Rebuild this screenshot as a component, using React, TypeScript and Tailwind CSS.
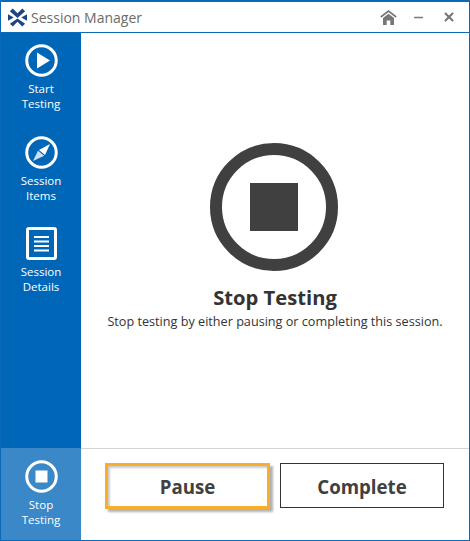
import { Minus, X } from 'lucide-react';

const font = { fontFamily: '"Open Sans", "Liberation Sans", sans-serif' };

function PlayIcon() {
  return (
    <svg width="33" height="33" viewBox="0 0 33 33">
      <circle cx="16.5" cy="16.5" r="14.75" fill="none" stroke="white" strokeWidth="3" />
      <path d="M12 8.5 L25 16.5 L12 24.5 Z" fill="white" />
    </svg>
  );
}

function CompassIcon() {
  return (
    <svg width="33" height="33" viewBox="0 0 33 33">
      <circle cx="16.5" cy="16.5" r="14.75" fill="none" stroke="white" strokeWidth="3" />
      <path d="M25 8 L20 19 L14 14 Z" fill="white" />
      <path d="M8 25 L13 14.8 L19.2 19.8 Z" fill="white" opacity="0.8" />
    </svg>
  );
}

function DetailsIcon() {
  return (
    <svg width="31" height="33" viewBox="0 0 31 33">
      <rect x="1.5" y="1.5" width="28" height="30" rx="1.5" fill="none" stroke="white" strokeWidth="3" />
      <path d="M8 9h15v2H8zM8 13.5h15v2H8zM8 18h15v2H8zM8 22.5h15v2H8z" fill="white" />
    </svg>
  );
}

function StopIcon() {
  return (
    <svg width="33" height="33" viewBox="0 0 33 33">
      <circle cx="16.5" cy="16.5" r="14.75" fill="none" stroke="white" strokeWidth="3" />
      <rect x="10.5" y="10.5" width="12" height="12" fill="white" />
    </svg>
  );
}

function Logo() {
  return (
    <svg width="19" height="19" viewBox="0 0 20 19">
      <path d="M2 3 L5 0 L10 5 L15 0 L18 3 L10 10 Z" fill="#1c4587" />
      <path d="M2 16 L5 19 L10 14 L15 19 L18 16 L10 10.5 Z" fill="#1c4587" />
      <path d="M0 6 L6 9.5 L0 13 Z" fill="#1c4587" />
      <path d="M20 6 L14 9.5 L20 13 Z" fill="#1c4587" />
    </svg>
  );
}

function HomeIcon() {
  return (
    <svg width="17" height="15" viewBox="0 0 17 15">
      <path d="M0.8 7 L8.5 1 L16.2 7" fill="none" stroke="#777777" strokeWidth="1.6" />
      <path d="M3 8 L8.5 3.8 L14 8 V15 H10.3 V10.5 H6.7 V15 H3 Z" fill="#777777" />
    </svg>
  );
}

function NavItem({ icon, top, bottom, active }: { icon: React.ReactNode; top: string; bottom: string; active?: boolean }) {
  return (
    <div className={`flex flex-col items-center text-[11.5px] leading-[15px] text-white ${active ? 'bg-[#3a88c8] h-[92px] pt-[12px]' : 'h-[91.5px] pt-[11px]'}`}>
      {icon}
      <div className="mt-[4px] text-center">
        <div>{top}</div>
        <div>{bottom}</div>
      </div>
    </div>
  );
}

export default function App() {
  return (
    <div style={font} className="w-[470px] h-[541px] bg-white border-x border-b border-t-2 border-[#0a6ab8] flex flex-col overflow-hidden">
      {/* Title bar */}
      <div className="h-[30px] shrink-0 flex items-center border-b border-[#0a6ab8] box-content">
        <div className="ml-[7px] flex"><Logo /></div>
        <span className="ml-[4px] text-[14px] text-[#6b6b6b]">Session Manager</span>
        <div className="ml-auto flex items-center text-[#777777]">
          <HomeIcon />
          <Minus size={13} strokeWidth={3} className="ml-[15px]" />
          <X size={14} strokeWidth={3.5} className="ml-[17px] mr-[13px]" />
        </div>
      </div>

      <div className="flex flex-1 min-h-0">
        {/* Sidebar */}
        <div className="w-[80px] bg-[#0067b8] flex flex-col">
          <NavItem icon={<PlayIcon />} top="Start" bottom="Testing" />
          <NavItem icon={<CompassIcon />} top="Session" bottom="Items" />
          <NavItem icon={<DetailsIcon />} top="Session" bottom="Details" />
          <div className="mt-auto">
            <NavItem icon={<StopIcon />} top="Stop" bottom="Testing" active />
          </div>
        </div>

        {/* Main panel */}
        <div className="flex-1 flex flex-col">
          <div className="flex-1 flex flex-col items-center pt-[110px]">
            <div className="w-[128px] h-[128px] mr-[2px] rounded-full border-[12px] border-[#404040] flex items-center justify-center">
              <div className="w-[48px] h-[48px] bg-[#404040]" />
            </div>
            <div className="mt-[13px] text-[20.2px] leading-[27px] font-bold text-[#333333]">Stop Testing</div>
            <div className="mt-[2px] text-[12.65px] leading-[17px] text-[#333333]">Stop testing by either pausing or completing this session.</div>
          </div>
          <div className="h-[92px] shrink-0 border-t border-[#d4d4d4] flex items-start pt-[14px] pl-[24px] gap-[10px]">
            <button className="w-[165px] h-[46px] pt-[2px] border-[3px] border-[#f9ae2b] shadow-[3px_3px_2px_rgba(0,0,0,0.3),inset_2px_2px_2px_rgba(0,0,0,0.2)] text-[18.7px] font-bold text-[#404040]">Pause</button>
            <button className="w-[164px] h-[45px] pt-[3px] border border-[#333333] text-[18.7px] font-bold text-[#404040]">Complete</button>
          </div>
        </div>
      </div>
    </div>
  );
}
